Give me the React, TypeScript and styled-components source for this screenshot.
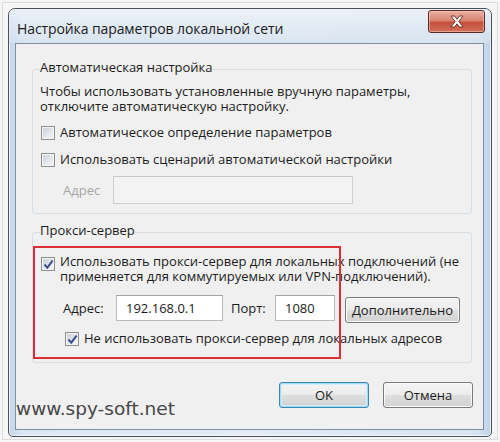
import styled, { createGlobalStyle } from 'styled-components'

const GlobalStyle = createGlobalStyle`
  html, body {
    margin: 0;
    padding: 0;
    background: #f6f6f6;
  }
  body {
    font-family: 'Open Sans', 'Noto Sans', sans-serif;
    color: #1c1c1c;
  }
`

const Page = styled.div`
  width: 500px;
  height: 442px;
  box-sizing: border-box;
  padding: 2px;
  background: #f6f6f6;
  display: flex;
`

const Shot = styled.div`
  flex: 1;
  display: flex;
  border: 1px solid #dcdcdc;
  padding: 5px 5px 2px 5px;
`

const Window = styled.div`
  flex: 1;
  display: flex;
  flex-direction: column;
  border: 1px solid #4b5058;
  border-radius: 7px 7px 5px 5px;
  background: linear-gradient(90deg, #c3d6eb 0px, #dde7f2 14px, #e3ebf4 50%, #d9e4f0 calc(100% - 14px), #bcd1e8 100%);
  box-shadow: inset 0 0 0 1px rgba(255, 255, 255, 0.7);
`

const TitleBar = styled.div`
  height: 34px;
  display: flex;
  padding: 0 6px 0 8px;
  background: linear-gradient(180deg, rgba(236, 242, 248, 0.9), rgba(214, 226, 239, 0.6));
  border-radius: 6px 6px 0 0;
`

const Title = styled.div`
  align-self: center;
  padding-top: 4px;
  font-size: 14px;
  color: #1a1a1a;
  letter-spacing: -0.1px;
`

const CloseButton = styled.div`
  margin: 1px 0 0 auto;
  width: 57px;
  height: 23px;
  box-sizing: border-box;
  border: 1px solid #5a2b24;
  border-radius: 3px;
  background: linear-gradient(180deg, #eab0a4 0%, #d98572 45%, #c5503c 55%, #d2705a 100%);
  box-shadow: inset 0 0 0 1px rgba(255, 210, 200, 0.5);
  display: flex;
  align-items: center;
  justify-content: center;
`

const Client = styled.div`
  flex: 1;
  position: relative;
  display: flex;
  flex-direction: column;
  margin: 0 7px 6px 6px;
  padding: 16px 11px 0 16px;
  border: 1px solid #7d8ea3;
  background: #f0f0f0;
`

const Group = styled.fieldset<{ $mt?: number; $pb: number }>`
  margin: ${p => p.$mt ?? 0}px 0 0 0;
  padding: 0 7px ${p => p.$pb}px 7px;
  border: 1px solid #d5dfe5;
  border-radius: 3px;
  font-size: 13px;
  line-height: 15px;
`

const Legend = styled.legend`
  padding: 0 0 4px 0;
  font-size: 13px;
  line-height: 15px;
  color: #1c1c1c;
`

const Note = styled.div`
  margin-top: 5px;
`

const ProxyBody = styled.div`
  position: relative;
  display: flow-root;
`

const CheckRow = styled.label<{ $mt: number; $indent?: number }>`
  display: flex;
  align-items: flex-start;
  gap: 5px;
  margin: ${p => p.$mt}px 0 0 ${p => 1 + (p.$indent ?? 0)}px;
`

const Box = styled.span<{ $top: number }>`
  flex: none;
  width: 14px;
  height: 14px;
  box-sizing: border-box;
  margin-top: ${p => p.$top}px;
  border: 1px solid #8e8f8f;
  background: linear-gradient(135deg, #c9ced6 0%, #e4e7ec 55%, #f7f7f7 100%);
  box-shadow: inset 0 0 0 1px #f3f3f3;
  display: flex;
  align-items: center;
  justify-content: center;
`

const FieldRow = styled.div<{ $mt: number; $indent: number }>`
  display: flex;
  align-items: center;
  margin: ${p => p.$mt}px 0 0 ${p => p.$indent}px;
`

const FieldLabel = styled.span<{ $disabled?: boolean; $w: number; $ml?: number }>`
  width: ${p => p.$w}px;
  margin-left: ${p => p.$ml ?? 0}px;
  color: ${p => (p.$disabled ? '#a6a6a6' : '#1c1c1c')};
`

const Input = styled.div<{ $w: number; $h: number; $disabled?: boolean }>`
  width: ${p => p.$w}px;
  height: ${p => p.$h}px;
  box-sizing: border-box;
  padding: 0 0 0 9px;
  display: flex;
  align-items: center;
  border: 1px solid ${p => (p.$disabled ? '#cfcfcf' : '#b5b9c0')};
  border-top-color: ${p => (p.$disabled ? '#c6c6c6' : '#9ea3ab')};
  background: ${p => (p.$disabled ? '#f3f3f3' : '#ffffff')};
`

const Button = styled.div<{ $w: number; $default?: boolean }>`
  width: ${p => p.$w}px;
  height: 26px;
  box-sizing: border-box;
  display: flex;
  align-items: center;
  justify-content: center;
  font-size: 13px;
  border: 1px solid ${p => (p.$default ? '#3a86b5' : '#7a7a7a')};
  border-radius: 3px;
  background: linear-gradient(180deg, #f4f4f4 0%, #ececec 48%, #dedede 52%, #d2d2d2 100%);
  box-shadow: ${p =>
    p.$default ? 'inset 0 0 0 1px #9fdcf3, inset 0 0 0 2px #d3eef8' : 'inset 0 0 0 1px #fbfbfb'};
`

const SideButton = styled(Button)`
  margin: 4px 0 0 10px;
`

const Footer = styled.div`
  display: flex;
  justify-content: flex-end;
  gap: 14px;
  margin-top: 19px;
  margin-right: -1px;
`

const RedMark = styled.div`
  position: absolute;
  left: -7px;
  top: 4px;
  width: 308px;
  height: 113px;
  box-sizing: border-box;
  border: 2px solid #dc2f37;
  pointer-events: none;
`

const Watermark = styled.div`
  position: absolute;
  left: 0;
  bottom: 10px;
  font-family: 'DejaVu Sans', Verdana, sans-serif;
  font-size: 18.5px;
  line-height: 20px;
  color: #474747;
`

const Check = ({ checked, top = 1 }: { checked?: boolean; top?: number }) => (
  <Box $top={top}>
    {checked && (
      <svg width="11" height="11" viewBox="0 0 11 11">
        <path d="M1.5 5.5 L4.3 8.6 L9.6 1.6" fill="none" stroke="#3d4f8c" strokeWidth="2" />
      </svg>
    )}
  </Box>
)

const CloseIcon = () => (
  <svg width="16" height="13" viewBox="0 0 16 13">
    <path
      d="M2 1 H5.5 L8 4.2 L10.5 1 H14 L9.8 6.5 L14 12 H10.5 L8 8.8 L5.5 12 H2 L6.2 6.5 Z"
      fill="#ffffff"
      stroke="#6a2a20"
      strokeWidth="0.9"
    />
  </svg>
)

export default function App() {
  return (
    <>
      <GlobalStyle />
      <Page>
        <Shot>
          <Window>
            <TitleBar>
              <Title>Настройка параметров локальной сети</Title>
              <CloseButton>
                <CloseIcon />
              </CloseButton>
            </TitleBar>
            <Client>
              <Group $pb={9}>
                <Legend>Автоматическая настройка</Legend>
                <Note>
                  Чтобы использовать установленные вручную параметры,
                  <br />
                  отключите автоматическую настройку.
                </Note>
                <CheckRow $mt={11}>
                  <Check />
                  <span>Автоматическое определение параметров</span>
                </CheckRow>
                <CheckRow $mt={12}>
                  <Check />
                  <span>Использовать сценарий автоматической настройки</span>
                </CheckRow>
                <FieldRow $mt={9} $indent={23}>
                  <FieldLabel $disabled $w={50}>Адрес</FieldLabel>
                  <Input $w={240} $h={28} $disabled />
                </FieldRow>
              </Group>
              <Group $mt={9} $pb={16}>
                <Legend>Прокси-сервер</Legend>
                <ProxyBody>
                  <CheckRow $mt={12}>
                    <Check checked top={3} />
                    <span>
                      Использовать прокси-сервер для локальных подключений (не
                      <br />
                      применяется для коммутируемых или VPN-подключений).
                    </span>
                  </CheckRow>
                  <FieldRow $mt={9} $indent={23}>
                    <FieldLabel $w={53}>Адрес:</FieldLabel>
                    <Input $w={107} $h={26}>192.168.0.1</Input>
                    <FieldLabel $w={44} $ml={8}>Порт:</FieldLabel>
                    <Input $w={60} $h={26}>1080</Input>
                    <SideButton $w={115}>Дополнительно</SideButton>
                  </FieldRow>
                  <CheckRow $mt={8} $indent={24}>
                    <Check checked />
                    <span>Не использовать прокси-сервер для локальных адресов</span>
                  </CheckRow>
                  <RedMark />
                </ProxyBody>
              </Group>
              <Footer>
                <Button $w={90} $default>OK</Button>
                <Button $w={90}>Отмена</Button>
              </Footer>
              <Watermark>www.spy-soft.net</Watermark>
            </Client>
          </Window>
        </Shot>
      </Page>
    </>
  )
}
